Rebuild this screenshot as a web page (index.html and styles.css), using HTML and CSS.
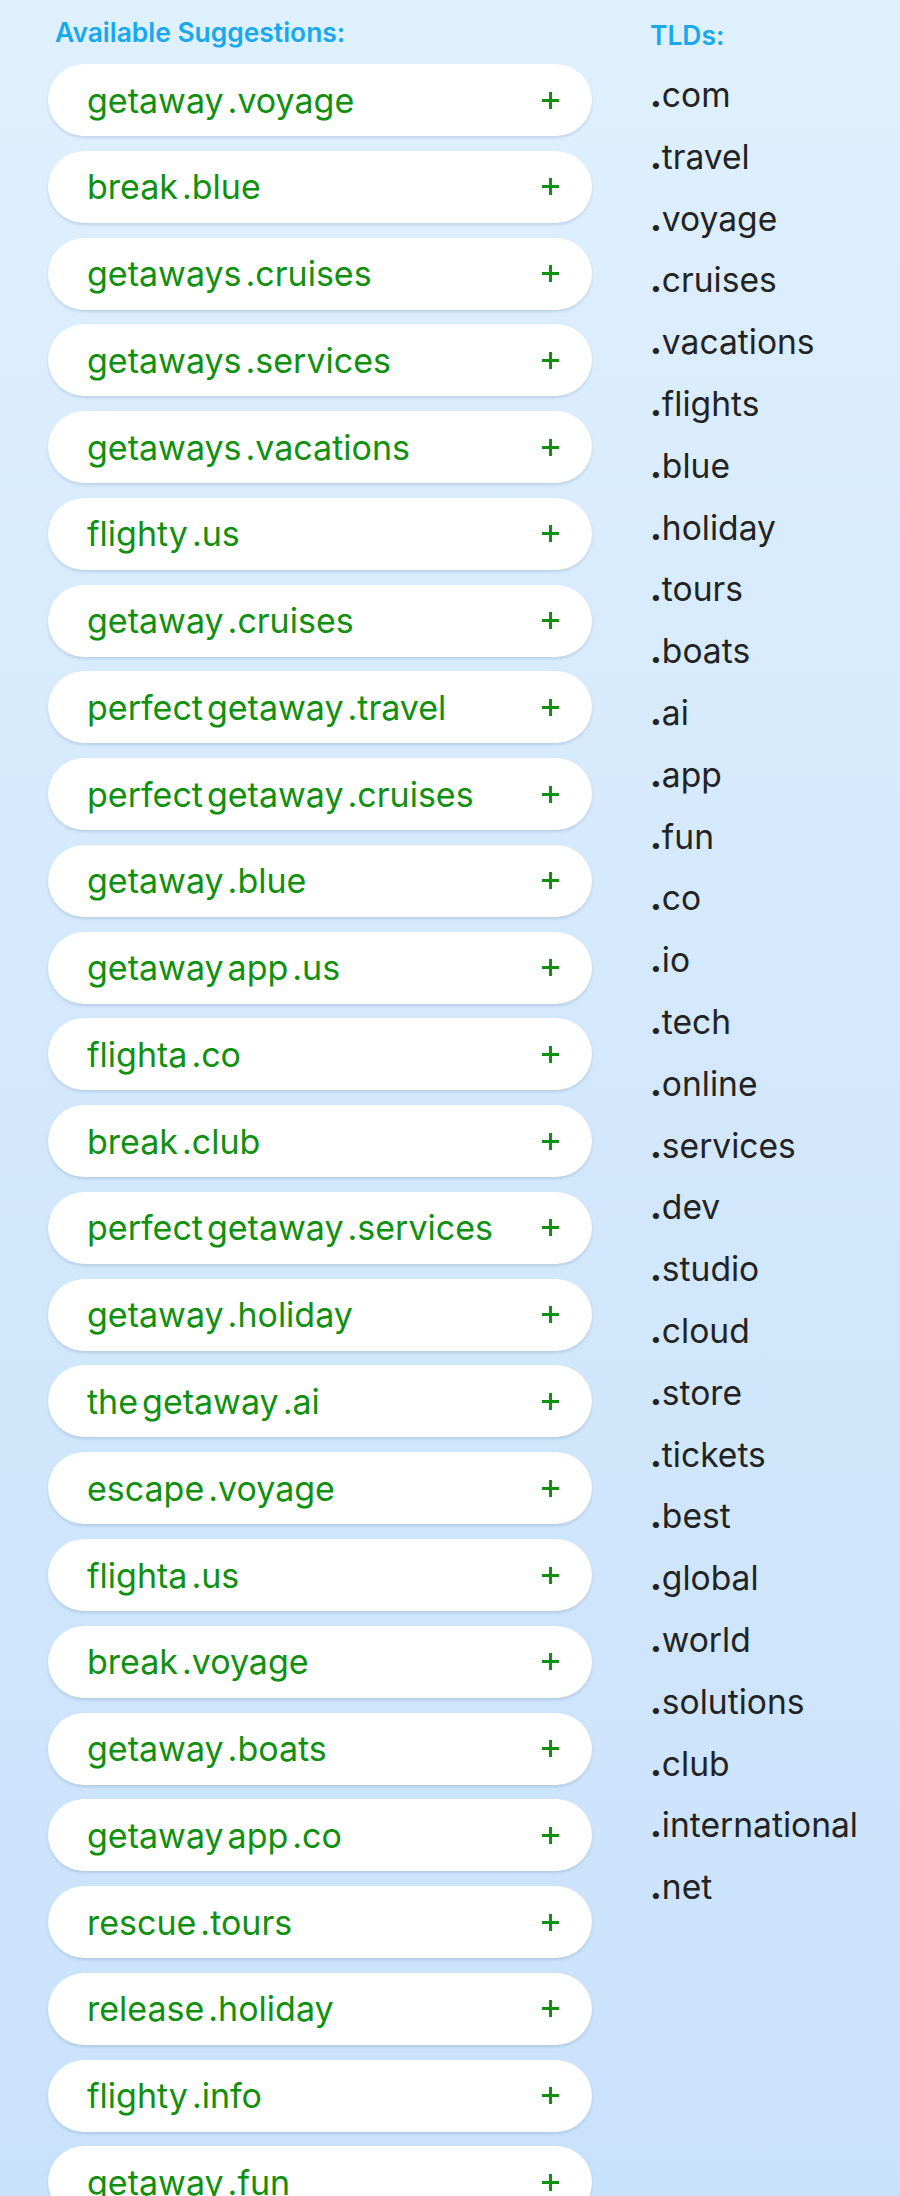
FILE: index.html
```html
<!DOCTYPE html>
<html>
<head>
<meta charset="utf-8">
<link rel="stylesheet" href="styles.css">
</head>
<body>
<div class="page">
  <section class="suggestions">
    <h2 class="heading heading-left">Available Suggestions:</h2>
    <ul class="pills">
      <li class="pill"><span class="name"><span>getaway</span><span>.voyage</span></span><span class="plus"></span></li>
      <li class="pill"><span class="name"><span>break</span><span>.blue</span></span><span class="plus"></span></li>
      <li class="pill"><span class="name"><span>getaways</span><span>.cruises</span></span><span class="plus"></span></li>
      <li class="pill"><span class="name"><span>getaways</span><span>.services</span></span><span class="plus"></span></li>
      <li class="pill"><span class="name"><span>getaways</span><span>.vacations</span></span><span class="plus"></span></li>
      <li class="pill"><span class="name"><span>flighty</span><span>.us</span></span><span class="plus"></span></li>
      <li class="pill"><span class="name"><span>getaway</span><span>.cruises</span></span><span class="plus"></span></li>
      <li class="pill"><span class="name"><span>perfect</span><span>getaway</span><span>.travel</span></span><span class="plus"></span></li>
      <li class="pill"><span class="name"><span>perfect</span><span>getaway</span><span>.cruises</span></span><span class="plus"></span></li>
      <li class="pill"><span class="name"><span>getaway</span><span>.blue</span></span><span class="plus"></span></li>
      <li class="pill"><span class="name"><span>getaway</span><span>app</span><span>.us</span></span><span class="plus"></span></li>
      <li class="pill"><span class="name"><span>flighta</span><span>.co</span></span><span class="plus"></span></li>
      <li class="pill"><span class="name"><span>break</span><span>.club</span></span><span class="plus"></span></li>
      <li class="pill"><span class="name"><span>perfect</span><span>getaway</span><span>.services</span></span><span class="plus"></span></li>
      <li class="pill"><span class="name"><span>getaway</span><span>.holiday</span></span><span class="plus"></span></li>
      <li class="pill"><span class="name"><span>the</span><span>getaway</span><span>.ai</span></span><span class="plus"></span></li>
      <li class="pill"><span class="name"><span>escape</span><span>.voyage</span></span><span class="plus"></span></li>
      <li class="pill"><span class="name"><span>flighta</span><span>.us</span></span><span class="plus"></span></li>
      <li class="pill"><span class="name"><span>break</span><span>.voyage</span></span><span class="plus"></span></li>
      <li class="pill"><span class="name"><span>getaway</span><span>.boats</span></span><span class="plus"></span></li>
      <li class="pill"><span class="name"><span>getaway</span><span>app</span><span>.co</span></span><span class="plus"></span></li>
      <li class="pill"><span class="name"><span>rescue</span><span>.tours</span></span><span class="plus"></span></li>
      <li class="pill"><span class="name"><span>release</span><span>.holiday</span></span><span class="plus"></span></li>
      <li class="pill"><span class="name"><span>flighty</span><span>.info</span></span><span class="plus"></span></li>
      <li class="pill"><span class="name"><span>getaway</span><span>.fun</span></span><span class="plus"></span></li>
    </ul>
  </section>
  <section class="tlds">
    <h2 class="heading heading-right">TLDs:</h2>
    <ul class="tld-list">
      <li><b>.</b>com</li>
      <li><b>.</b>travel</li>
      <li><b>.</b>voyage</li>
      <li><b>.</b>cruises</li>
      <li><b>.</b>vacations</li>
      <li><b>.</b>flights</li>
      <li><b>.</b>blue</li>
      <li><b>.</b>holiday</li>
      <li><b>.</b>tours</li>
      <li><b>.</b>boats</li>
      <li><b>.</b>ai</li>
      <li><b>.</b>app</li>
      <li><b>.</b>fun</li>
      <li><b>.</b>co</li>
      <li><b>.</b>io</li>
      <li><b>.</b>tech</li>
      <li><b>.</b>online</li>
      <li><b>.</b>services</li>
      <li><b>.</b>dev</li>
      <li><b>.</b>studio</li>
      <li><b>.</b>cloud</li>
      <li><b>.</b>store</li>
      <li><b>.</b>tickets</li>
      <li><b>.</b>best</li>
      <li><b>.</b>global</li>
      <li><b>.</b>world</li>
      <li><b>.</b>solutions</li>
      <li><b>.</b>club</li>
      <li><b>.</b>international</li>
      <li><b>.</b>net</li>
    </ul>
  </section>
</div>
</body>
</html>
```
FILE: styles.css
```css
html, body {
  margin: 0;
  padding: 0;
}
body {
  width: 900px;
  height: 2196px;
  overflow: hidden;
  background: linear-gradient(180deg, #dff0fe 0%, #d3e8fc 50%, #c9e2fb 100%);
  font-family: Inter, "Noto Sans", sans-serif;
}
.page {
  display: flex;
  align-items: flex-start;
}
.suggestions {
  width: 544px;
  margin-left: 48px;
}
.tlds {
  margin-left: 58px;
}
.heading {
  margin: 0;
  font-size: 26.4px;
  line-height: 32px;
  font-weight: 600;
  color: #18a8ee;
}
.heading-left {
  padding: 16px 0 0 7px;
  height: 48px;
  box-sizing: border-box;
}
.heading-right {
  padding: 19px 0 0 0;
  height: 48px;
  box-sizing: border-box;
}
.pills {
  list-style: none;
  margin: 16px 0 0 0;
  padding: 0;
  display: flex;
  flex-direction: column;
  gap: 14.78px;
}
.pill {
  height: 72px;
  border-radius: 36px;
  background: #ffffff;
  box-shadow: 0 2px 3px rgba(60, 90, 130, 0.18);
  display: flex;
  align-items: center;
  justify-content: space-between;
  padding: 0 33px 0 39px;
}
.name {
  display: flex;
  gap: 4px;
  font-size: 34px;
  color: #10900f;
}
.plus {
  position: relative;
  width: 17px;
  height: 17px;
}
.plus::before,
.plus::after {
  content: "";
  position: absolute;
  background: #10900f;
}
.plus::before {
  left: 0;
  right: 0;
  top: 7px;
  height: 3px;
}
.plus::after {
  top: 0;
  bottom: 0;
  left: 7px;
  width: 3px;
}
.tld-list {
  list-style: none;
  margin: 16px 0 0 0;
  padding: 0;
}
.tld-list li {
  font-size: 33.6px;
  line-height: 61.8px;
  color: #232323;
}
.tld-list b {
  font-weight: 800;
}
```
